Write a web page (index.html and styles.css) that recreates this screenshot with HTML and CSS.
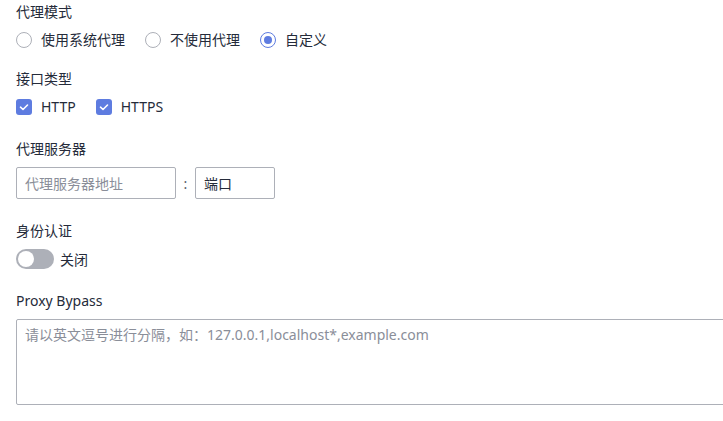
FILE: index.html
```html
<!DOCTYPE html>
<html lang="zh-CN">
<head>
  <meta charset="UTF-8" />
  <title>代理设置</title>
  <link rel="stylesheet" href="styles.css">
</head>
<body>
  <div class="settings">
    <div class="field tight">
      <div class="field-label">代理模式</div>
      <div class="options">
        <label class="radio"><span class="radio-dot"></span>使用系统代理</label>
        <label class="radio"><span class="radio-dot"></span>不使用代理</label>
        <label class="radio checked"><span class="radio-dot"></span>自定义</label>
      </div>
    </div>

    <div class="field">
      <div class="field-label">接口类型</div>
      <div class="options">
        <label class="checkbox"><span class="check-box"><svg viewBox="0 0 16 16" width="16" height="16"><path d="M4.5 8.2 L7 10.5 L11.5 6" fill="none" stroke="#fff" stroke-width="1.6" stroke-linecap="round" stroke-linejoin="round"/></svg></span>HTTP</label>
        <label class="checkbox"><span class="check-box"><svg viewBox="0 0 16 16" width="16" height="16"><path d="M4.5 8.2 L7 10.5 L11.5 6" fill="none" stroke="#fff" stroke-width="1.6" stroke-linecap="round" stroke-linejoin="round"/></svg></span>HTTPS</label>
      </div>
    </div>

    <div class="field">
      <div class="field-label">代理服务器</div>
      <div class="server-row">
        <input class="text-input host" type="text" placeholder="代理服务器地址">
        <span class="colon">:</span>
        <input class="text-input port" type="text" placeholder="端口">
      </div>
    </div>

    <div class="field">
      <div class="field-label">身份认证</div>
      <div class="switch-row">
        <span class="switch"><span class="switch-knob"></span></span>
        <span class="switch-text">关闭</span>
      </div>
    </div>

    <div class="field">
      <div class="field-label">Proxy Bypass</div>
      <textarea class="bypass" placeholder="请以英文逗号进行分隔，如：127.0.0.1,localhost*,example.com"></textarea>
    </div>
  </div>
</body>
</html>
```

FILE: styles.css
```css
* {
  box-sizing: border-box;
  margin: 0;
  padding: 0;
}

body {
  width: 723px;
  height: 421px;
  overflow: hidden;
  background: #fff;
  color: #252b3a;
  font-family: 'Noto Sans', 'Noto Sans CJK SC', sans-serif;
  font-size: 14px;
}

.settings {
  padding: 2px 0 0 16px;
}

.field {
  margin-bottom: 22px;
}

.field.tight {
  margin-bottom: 19px;
}

.field-label {
  height: 20px;
  line-height: 20px;
  margin-bottom: 8px;
}

.options {
  display: flex;
  gap: 20px;
  height: 20px;
  align-items: center;
}

.radio,
.checkbox {
  display: flex;
  align-items: center;
  gap: 9px;
  line-height: 20px;
}

.radio-dot {
  width: 16px;
  height: 16px;
  border: 1px solid #adb0b8;
  border-radius: 50%;
  display: flex;
  align-items: center;
  justify-content: center;
}

.radio.checked .radio-dot {
  border-color: #5e7ce0;
}

.radio.checked .radio-dot::after {
  content: '';
  width: 8px;
  height: 8px;
  border-radius: 50%;
  background: #5e7ce0;
}

.check-box {
  width: 16px;
  height: 16px;
  border-radius: 3px;
  background: #5e7ce0;
  display: flex;
}

.server-row {
  display: flex;
  align-items: center;
}

.text-input {
  height: 32px;
  border: 1px solid #adb0b8;
  border-radius: 2px;
  padding: 0 8px;
  font-family: inherit;
  font-size: 14px;
  color: #252b3a;
  outline: none;
}

.text-input::placeholder {
  color: #8a8e99;
}

.text-input.port::placeholder {
  color: #252b3a;
}

.host {
  width: 160px;
}

.port {
  width: 80px;
}

.colon {
  width: 19px;
  text-align: center;
  color: #575d6c;
}

.switch-row {
  display: flex;
  align-items: center;
  gap: 6px;
  height: 20px;
}

.switch {
  width: 38px;
  height: 20px;
  border-radius: 10px;
  background: #adb0b8;
  padding: 2px;
  display: flex;
}

.switch-knob {
  width: 16px;
  height: 16px;
  border-radius: 50%;
  background: #fff;
}

.bypass {
  display: block;
  width: 740px;
  height: 86px;
  border: 1px solid #adb0b8;
  border-radius: 2px;
  padding: 5px 8px;
  font-family: inherit;
  font-size: 14px;
  line-height: 20px;
  resize: none;
  outline: none;
}

.bypass::placeholder {
  color: #8a8e99;
}
```
